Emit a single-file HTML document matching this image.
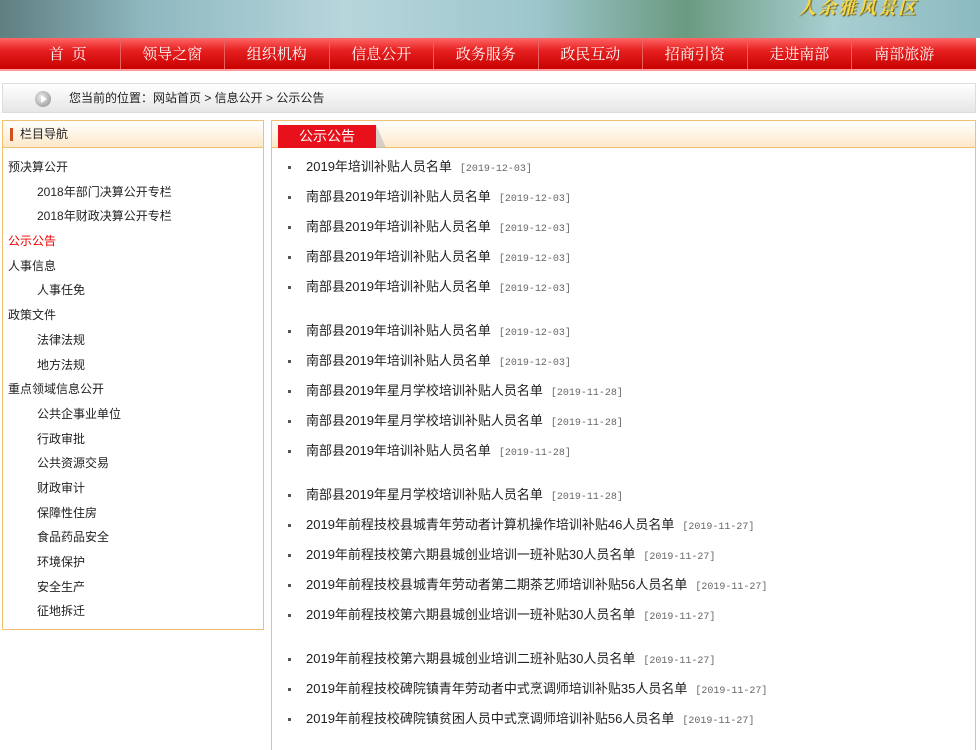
<!DOCTYPE html><html><head><meta charset="utf-8"><style>
*{margin:0;padding:0;box-sizing:border-box}
body{width:980px;height:738px;overflow:hidden;background:#fff;font-family:"Liberation Sans","Noto Sans CJK SC",sans-serif;color:#222;position:relative}
.banner{position:absolute;left:0;top:0;width:980px;height:38px;background:linear-gradient(90deg,#5f7f80 0%,#8fb8c0 15%,#b7d6dc 35%,#9cc6cc 55%,#6a9a80 70%,#a8cfd2 85%,#8bbac0 100%)}
.banner span{position:absolute;right:62px;top:-6px;color:#f6d84a;font-size:18px;font-style:italic;font-weight:bold;font-family:"Noto Serif CJK SC",serif;text-shadow:1px 1px 1px #6a5a10;letter-spacing:2px}
.nav{position:absolute;left:0;top:38px;width:976px;height:33px;background:linear-gradient(#f66 0%,#e62020 40%,#c80000 100%);border-bottom:2px solid #f99;display:flex;padding-left:16px}
.nav div{width:104.5px;text-align:center;color:#fff;font-size:15px;line-height:31px;border-right:1px solid #e86060;font-family:"Noto Serif CJK SC",serif}
.nav div:last-child{border:none}
.crumb{position:absolute;left:2px;top:83px;width:974px;height:30px;background:linear-gradient(#fff,#e6e6e6);border:1px solid #ddd;font-size:12px;line-height:29px;padding-left:66px;color:#222}
.crumb i{position:absolute;left:32px;top:7px;width:16px;height:16px;border-radius:50%;background:radial-gradient(circle at 40% 40%,#eee,#888)}
.crumb i:after{content:"";position:absolute;left:6px;top:4px;border-left:6px solid #fff;border-top:4px solid transparent;border-bottom:4px solid transparent}
.left{position:absolute;left:2px;top:120px;width:262px;height:510px;border:1px solid #f0c070}
.lh{height:27px;background:linear-gradient(#fff,#fde8c8);border-bottom:1px solid #f0c070;font-size:12px;line-height:26px;padding-left:17px;position:relative}
.lh:before{content:"";position:absolute;left:7px;top:7px;width:3px;height:13px;background:#d05020}
.left ul{list-style:none;padding-top:7px}
.left li{font-size:12px;height:24.7px;line-height:24.7px;padding-left:5px;color:#222}
.left li.s{padding-left:34px}
.left li.r{color:#e00}
.right{position:absolute;left:271px;top:120px;width:705px;height:630px;border-left:1px solid #f0c070;border-top:1px solid #f0c070;border-right:1px solid #f0c070}
.rh{height:27px;background:linear-gradient(#fff,#fde8c8);border-bottom:1px solid #f0c070;position:relative}
.rh b{position:absolute;left:6px;top:4px;width:98px;height:23px;background:#e8101a;color:#fff;font-weight:normal;font-size:14px;line-height:22px;text-align:center}
.rh b:after{content:"";position:absolute;right:-10px;top:0;border-left:10px solid #bbb;border-top:23px solid transparent;opacity:.6}
.right ul{list-style:none;padding-top:4px}
.right li{font-size:13px;height:30px;line-height:30px;padding-left:34px;position:relative}
.right li:before{content:"";position:absolute;left:16px;top:14px;width:3px;height:3px;background:#555}
.right li.g{margin-top:14px}
.right li em{font-style:normal;font-size:10px;font-family:"Liberation Mono",monospace;color:#666;margin-left:8px}
</style></head><body>
<div class="banner"><span>人余雅风景区</span></div>
<div class="nav"><div>首&nbsp;&nbsp;页</div><div>领导之窗</div><div>组织机构</div><div>信息公开</div><div>政务服务</div><div>政民互动</div><div>招商引资</div><div>走进南部</div><div>南部旅游</div></div>
<div class="crumb"><i></i>您当前的位置：网站首页 &gt; 信息公开 &gt; 公示公告</div>
<div class="left"><div class="lh">栏目导航</div><ul>
<li>预决算公开</li><li class="s">2018年部门决算公开专栏</li><li class="s">2018年财政决算公开专栏</li><li class="r">公示公告</li><li>人事信息</li><li class="s">人事任免</li><li>政策文件</li><li class="s">法律法规</li><li class="s">地方法规</li><li>重点领域信息公开</li><li class="s">公共企事业单位</li><li class="s">行政审批</li><li class="s">公共资源交易</li><li class="s">财政审计</li><li class="s">保障性住房</li><li class="s">食品药品安全</li><li class="s">环境保护</li><li class="s">安全生产</li><li class="s">征地拆迁</li></ul></div>
<div class="right"><div class="rh"><b>公示公告</b></div><ul>
<li>2019年培训补贴人员名单<em>[2019-12-03]</em></li>
<li>南部县2019年培训补贴人员名单<em>[2019-12-03]</em></li>
<li>南部县2019年培训补贴人员名单<em>[2019-12-03]</em></li>
<li>南部县2019年培训补贴人员名单<em>[2019-12-03]</em></li>
<li>南部县2019年培训补贴人员名单<em>[2019-12-03]</em></li>
<li class="g">南部县2019年培训补贴人员名单<em>[2019-12-03]</em></li>
<li>南部县2019年培训补贴人员名单<em>[2019-12-03]</em></li>
<li>南部县2019年星月学校培训补贴人员名单<em>[2019-11-28]</em></li>
<li>南部县2019年星月学校培训补贴人员名单<em>[2019-11-28]</em></li>
<li>南部县2019年培训补贴人员名单<em>[2019-11-28]</em></li>
<li class="g">南部县2019年星月学校培训补贴人员名单<em>[2019-11-28]</em></li>
<li>2019年前程技校县城青年劳动者计算机操作培训补贴46人员名单<em>[2019-11-27]</em></li>
<li>2019年前程技校第六期县城创业培训一班补贴30人员名单<em>[2019-11-27]</em></li>
<li>2019年前程技校县城青年劳动者第二期茶艺师培训补贴56人员名单<em>[2019-11-27]</em></li>
<li>2019年前程技校第六期县城创业培训一班补贴30人员名单<em>[2019-11-27]</em></li>
<li class="g">2019年前程技校第六期县城创业培训二班补贴30人员名单<em>[2019-11-27]</em></li>
<li>2019年前程技校碑院镇青年劳动者中式烹调师培训补贴35人员名单<em>[2019-11-27]</em></li>
<li>2019年前程技校碑院镇贫困人员中式烹调师培训补贴56人员名单<em>[2019-11-27]</em></li>
</ul></div>
</body></html>
